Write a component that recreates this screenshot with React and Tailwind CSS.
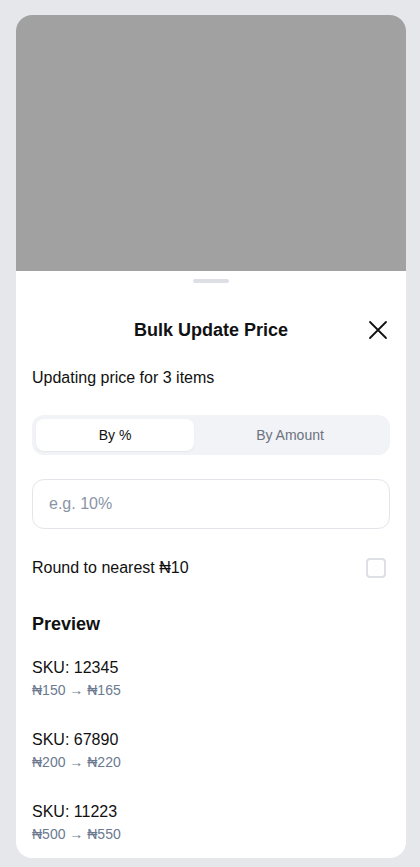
import React from "react";

export default function App() {
  const items = [
    { sku: "12345", from: "₦150", to: "₦165" },
    { sku: "67890", from: "₦200", to: "₦220" },
    { sku: "11223", from: "₦500", to: "₦550" },
  ];
  return (
    <div
      className="min-h-[867px] bg-[#e5e7eb] px-4 pt-[15px]"
      style={{ fontFamily: '"Liberation Sans", Arial, "DejaVu Sans", sans-serif' }}
    >
      <div className="h-[843px] w-[390px] overflow-hidden rounded-2xl bg-white flex flex-col">
        <div className="h-[256px] bg-[#a1a1a1]" />
        <div className="flex flex-1 flex-col px-4">
          <div className="flex justify-center pt-2">
            <div className="h-1 w-9 rounded-full bg-[#dcdfe4]" />
          </div>
          <div className="relative mt-[33px] flex h-7 items-center justify-center">
            <h2 className="text-lg font-bold leading-7 text-[#111111]">Bulk Update Price</h2>
            <button className="absolute right-0 top-1/2 -translate-y-1/2 flex h-6 w-6 items-center justify-center text-[#111111]">
              <svg width="24" height="24" viewBox="0 0 24 24" fill="none" stroke="currentColor" strokeWidth="1.8" strokeLinecap="round">
                <path d="M4 4L20 20M20 4L4 20" />
              </svg>
            </button>
          </div>
          <p className="mt-[22px] text-base leading-6 text-[#111111]">Updating price for 3 items</p>
          <div className="mt-[25px] flex h-10 rounded-xl bg-[#f1f3f6] p-1">
            <button className="w-[158px] rounded-lg bg-white text-sm text-[#111111] shadow-[0_1px_2px_rgba(0,0,0,0.06)]">By %</button>
            <button className="flex-1 text-sm text-[#6b7280]">By Amount</button>
          </div>
          <div className="mt-6 flex h-[50px] items-center rounded-xl border border-[#e2e5ea] px-4">
            <span className="text-base text-[#8a94a6]">e.g. 10%</span>
          </div>
          <div className="mt-[27px] flex h-6 items-center justify-between">
            <span className="text-base text-[#111111]">Round to nearest ₦10</span>
            <div className="mr-1 h-5 w-5 rounded-[4px] border-2 border-[#dde1e6] bg-white" />
          </div>
          <h3 className="mt-[30px] text-lg font-bold leading-7 text-[#111111]">Preview</h3>
          <div className="mt-[18px] flex flex-col gap-[28px]">
            {items.map((it) => (
              <div key={it.sku} className="flex flex-col">
                <span className="text-base leading-6 text-[#111111]">SKU: {it.sku}</span>
                <span className="text-sm leading-5 text-[#6b7a90]">
                  {it.from} → {it.to}
                </span>
              </div>
            ))}
          </div>
        </div>
      </div>
    </div>
  );
}
